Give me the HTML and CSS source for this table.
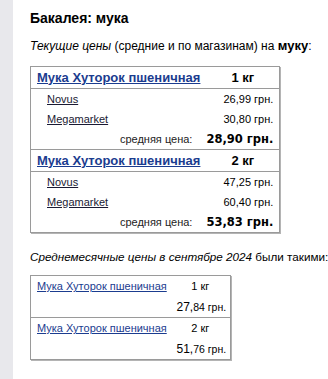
FILE: index.html
```html
<!DOCTYPE html>
<html lang="ru">
<head>
    <meta charset="UTF-8">
    <meta name="viewport" content="width=device-width, initial-scale=1.0">
    <title>Бакалея: мука</title>
    <link rel="stylesheet" href="styles.css">
</head>
<body>
    <div class="page">
        <div class="side-strip"></div>
        <div class="content">
            <h1 class="cat-title">Бакалея: мука</h1>

            <p class="intro"><em>Текущие цены</em> (средние и по магазинам) на <strong>муку</strong>:</p>

            <table class="price-table">
                <tbody class="group">
                    <tr class="group-head">
                        <td><a href="#" class="product-link">Мука Хуторок пшеничная</a></td>
                        <td class="weight">1 кг</td>
                    </tr>
                    <tr class="store-row">
                        <td><a href="#" class="store-link">Novus</a></td>
                        <td class="price">26,<small>99 грн.</small></td>
                    </tr>
                    <tr class="store-row">
                        <td><a href="#" class="store-link">Megamarket</a></td>
                        <td class="price">30,<small>80 грн.</small></td>
                    </tr>
                    <tr class="avg-row">
                        <td class="avg-label">средняя цена:</td>
                        <td class="avg-price">28,90 грн.</td>
                    </tr>
                </tbody>
                <tbody class="group">
                    <tr class="group-head">
                        <td><a href="#" class="product-link">Мука Хуторок пшеничная</a></td>
                        <td class="weight">2 кг</td>
                    </tr>
                    <tr class="store-row">
                        <td><a href="#" class="store-link">Novus</a></td>
                        <td class="price">47,<small>25 грн.</small></td>
                    </tr>
                    <tr class="store-row">
                        <td><a href="#" class="store-link">Megamarket</a></td>
                        <td class="price">60,<small>40 грн.</small></td>
                    </tr>
                    <tr class="avg-row">
                        <td class="avg-label">средняя цена:</td>
                        <td class="avg-price">53,83 грн.</td>
                    </tr>
                </tbody>
            </table>

            <p class="intro month"><em>Среднемесячные цены в сентябре 2024</em> были такими:</p>

            <table class="month-table">
                <tbody class="group">
                    <tr>
                        <td class="name"><a href="#" class="month-link">Мука Хуторок пшеничная</a></td>
                        <td class="weight">1 кг</td>
                    </tr>
                    <tr>
                        <td class="name"></td>
                        <td class="price">27,<small>84 грн.</small></td>
                    </tr>
                </tbody>
                <tbody class="group">
                    <tr>
                        <td class="name"><a href="#" class="month-link">Мука Хуторок пшеничная</a></td>
                        <td class="weight">2 кг</td>
                    </tr>
                    <tr>
                        <td class="name"></td>
                        <td class="price">51,<small>76 грн.</small></td>
                    </tr>
                </tbody>
            </table>
        </div>
    </div>
</body>
</html>
```

FILE: styles.css
```css
* { margin: 0; padding: 0; box-sizing: border-box; }
body { font-family: "Liberation Sans", Arial, sans-serif; color: #000; background: #fff; }
.page { display: flex; min-height: 379px; }
.side-strip { width: 13px; flex: none; background: #e8e8ec; }
.content { padding: 10px 0 0 17px; flex: 1; min-width: 0; }

.cat-title { font-size: 14px; font-weight: bold; line-height: 16px; margin-bottom: 13px; }
.intro { font-size: 12px; line-height: 14px; white-space: nowrap; }
.intro strong { font-size: 13px; font-weight: bold; }

/* current prices, grouped per product */
.price-table { border-collapse: collapse; width: 248px; margin-top: 13px; border: 1px solid #9a9a9a; box-shadow: 1px 1px 0 #b4b4b4; }
.price-table td { padding: 0; white-space: nowrap; line-height: 14px; }
.group + .group { border-top: 1px solid #9a9a9a; }
.group-head td { height: 22px; border-bottom: 1px solid #9a9a9a; font-size: 13px; font-weight: bold; padding: 0 6px; }
.group-head .weight { text-align: center; }
.product-link { color: #1b3c8f; }
.store-row td { height: 20px; font-size: 11px; }
.store-row td:first-child { padding-left: 16px; }
.store-link { color: #1a1a33; }
.price { text-align: right; padding-right: 6px !important; font-size: 13px; }
.price small { font-size: 11px; }
.avg-row td { height: 21px; }
.avg-label { text-align: right; font-size: 11px; color: #222; padding-right: 14px !important; }
.avg-price { text-align: right; font-family: "DejaVu Sans", Verdana, sans-serif; font-weight: bold; font-size: 11.5px; padding-right: 6px !important; }

/* monthly averages */
.month { margin-top: 17px; font-size: 11.7px; }
.month-table { border-collapse: collapse; table-layout: fixed; width: 201px; margin-top: 11px; border: 1px solid #9a9a9a; box-shadow: 1px 1px 0 #b4b4b4; }
.month-table td { height: 21px; font-size: 11px; line-height: 14px; padding: 0 6px; white-space: nowrap; }
.month-table .name { width: 140px; }
.month-table .weight { text-align: center; }
.month-table .price { font-size: 12px; }
.month-table .price small { font-size: 10.5px; }
.month-link { color: #1b3c8f; }
```
